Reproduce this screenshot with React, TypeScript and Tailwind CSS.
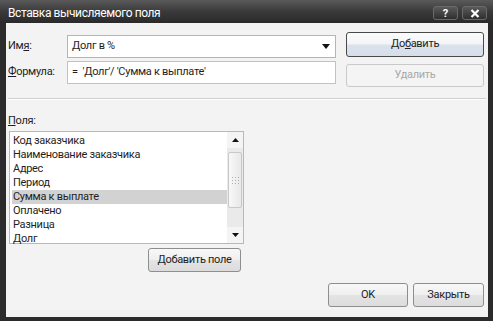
import React from "react";

const font = { fontFamily: 'Roboto, "Noto Sans", sans-serif' };

function Btn({
  children,
  className = "",
  def = false,
  disabled = false,
}: {
  children: React.ReactNode;
  className?: string;
  def?: boolean;
  disabled?: boolean;
}) {
  return (
    <div
      className={
        "flex items-center justify-center rounded-[3px] border " +
        (def
          ? "border-[#4a4a4a] bg-[linear-gradient(#fbfbfb_0%,#f2f4f7_48%,#dbe2ec_52%,#d6deea_100%)] text-[#222] "
          : disabled
          ? "border-[#c9c9c9] bg-[#f4f4f4] text-[#a8a8a8] "
          : "border-[#8e8e8e] bg-[linear-gradient(#f8f8f8_0%,#efefef_48%,#e4e4e4_52%,#dcdcdc_100%)] text-[#222] ") +
        className
      }
    >
      {children}
    </div>
  );
}

const items = [
  "Код заказчика",
  "Наименование заказчика",
  "Адрес",
  "Период",
  "Сумма к выплате",
  "Оплачено",
  "Разница",
  "Долг",
];

export default function App() {
  return (
    <div className="w-[493px] h-[321px] bg-[#2b2b2b] flex flex-col overflow-hidden" style={font}>
      {/* Title bar */}
      <div className="h-[23px] flex items-center bg-[linear-gradient(#5a5a5a,#3a3a3a_50%,#2a2a2a)] pl-[8px] pr-[6px]">
        <div className="flex-1 text-white text-[12px] tracking-[-0.4px] leading-none pt-[2px]">Вставка вычисляемого поля</div>
        <div className="flex gap-[4px] mt-[3px]">
          <div className="w-[25px] h-[14px] rounded-[3px] border border-[#6a6a6a] bg-[linear-gradient(#5a5a5a,#2e2e2e)] flex items-center justify-center text-white text-[11px] font-bold leading-none">?</div>
          <div className="w-[25px] h-[14px] rounded-[3px] border border-[#6a6a6a] bg-[linear-gradient(#5a5a5a,#2e2e2e)] flex items-center justify-center">
            <svg width="10" height="9" viewBox="0 0 10 9">
              <path d="M1.5 1 L8.5 8 M8.5 1 L1.5 8" stroke="#fff" strokeWidth="2.2" />
            </svg>
          </div>
        </div>
      </div>
      {/* Client */}
      <div className="ml-[6px] mr-[5px] h-[294px] bg-[#f3f3f3] flex flex-col text-[11px] tracking-[-0.3px] text-[#1e1e1e]">
        <div className="flex">
          <div className="w-[330px] mt-[12px] flex flex-col gap-[3px]">
            <div className="flex items-center h-[23px]">
              <div className="w-[61px] pl-[2px]">
                Им<span className="underline">я</span>:
              </div>
              <div className="flex-1 h-[23px] bg-white border border-[#b5b5b5] flex items-center pl-[4px] pr-[3px]">
                <div className="flex-1">Долг в %</div>
                <svg width="8" height="5" viewBox="0 0 8 5" className="mr-[2px]">
                  <path d="M0 0 H8 L4 5 Z" fill="#111" />
                </svg>
              </div>
            </div>
            <div className="flex items-center h-[23px]">
              <div className="w-[61px] pl-[2px]">
                <span className="underline">Ф</span>ормула:
              </div>
              <div className="flex-1 h-[23px] bg-white border border-[#c2c2c2] flex items-center pl-[4px]">
                =&nbsp; 'Долг'/ 'Сумма к выплате'
              </div>
            </div>
          </div>
          <div className="ml-[10px] mt-[9px] w-[138px] flex flex-col gap-[7px]">
            <Btn def className="h-[25px]">
              До<span className="underline">б</span>авить
            </Btn>
            <Btn disabled className="h-[23px]">
              Удалить
            </Btn>
          </div>
        </div>
        <div className="mt-[11px] mx-[2px] h-[2px] border-t border-[#cfcfcf] border-b border-b-white" />
        <div className="mt-[13px] pl-[2px] leading-[15px]">
          <span className="underline">П</span>оля:
        </div>
        <div className="mt-[3px] ml-[3px] w-[235px] h-[113px] bg-white border border-[#b9b9b9] flex">
          <div className="flex-1 pt-[2px] pl-[2px]">
            {items.map((t) => (
              <div
                key={t}
                className={"h-[14px] leading-[14px] pl-[1px] " + (t === "Сумма к выплате" ? "bg-[#d2d2d2]" : "")}
              >
                {t}
              </div>
            ))}
          </div>
          <div className="w-[16px] flex flex-col bg-[#eaeaea]">
            <div className="h-[16px] flex items-center justify-center bg-[#f4f4f4]">
              <svg width="7" height="4" viewBox="0 0 7 4">
                <path d="M0 4 H7 L3.5 0 Z" fill="#111" />
              </svg>
            </div>
            <div className="mt-[4px] mx-[1px] h-[56px] bg-[linear-gradient(90deg,#f8f8f8,#e8e8e8)] border border-[#c8c8c8] rounded-[2px] flex items-center justify-center">
              <svg width="7" height="7" viewBox="0 0 7 7">
                <g fill="#b0b0b0">
                  <rect x="0" y="0" width="1" height="1" />
                  <rect x="3" y="0" width="1" height="1" />
                  <rect x="6" y="0" width="1" height="1" />
                  <rect x="0" y="3" width="1" height="1" />
                  <rect x="3" y="3" width="1" height="1" />
                  <rect x="6" y="3" width="1" height="1" />
                  <rect x="0" y="6" width="1" height="1" />
                  <rect x="3" y="6" width="1" height="1" />
                  <rect x="6" y="6" width="1" height="1" />
                </g>
              </svg>
            </div>
            <div className="flex-1" />
            <div className="h-[16px] flex items-center justify-center bg-[#f4f4f4]">
              <svg width="7" height="4" viewBox="0 0 7 4">
                <path d="M0 0 H7 L3.5 4 Z" fill="#111" />
              </svg>
            </div>
          </div>
        </div>
        <div className="flex ml-[142px] mt-[4px]">
          <Btn className="w-[93px] h-[24px]">Добавить поле</Btn>
        </div>
        <div className="flex justify-end gap-[5px] mt-[11px] mr-[4px]">
          <Btn className="w-[80px] h-[24px]">OK</Btn>
          <Btn className="w-[71px] h-[24px]">Закрыть</Btn>
        </div>
      </div>
    </div>
  );
}
